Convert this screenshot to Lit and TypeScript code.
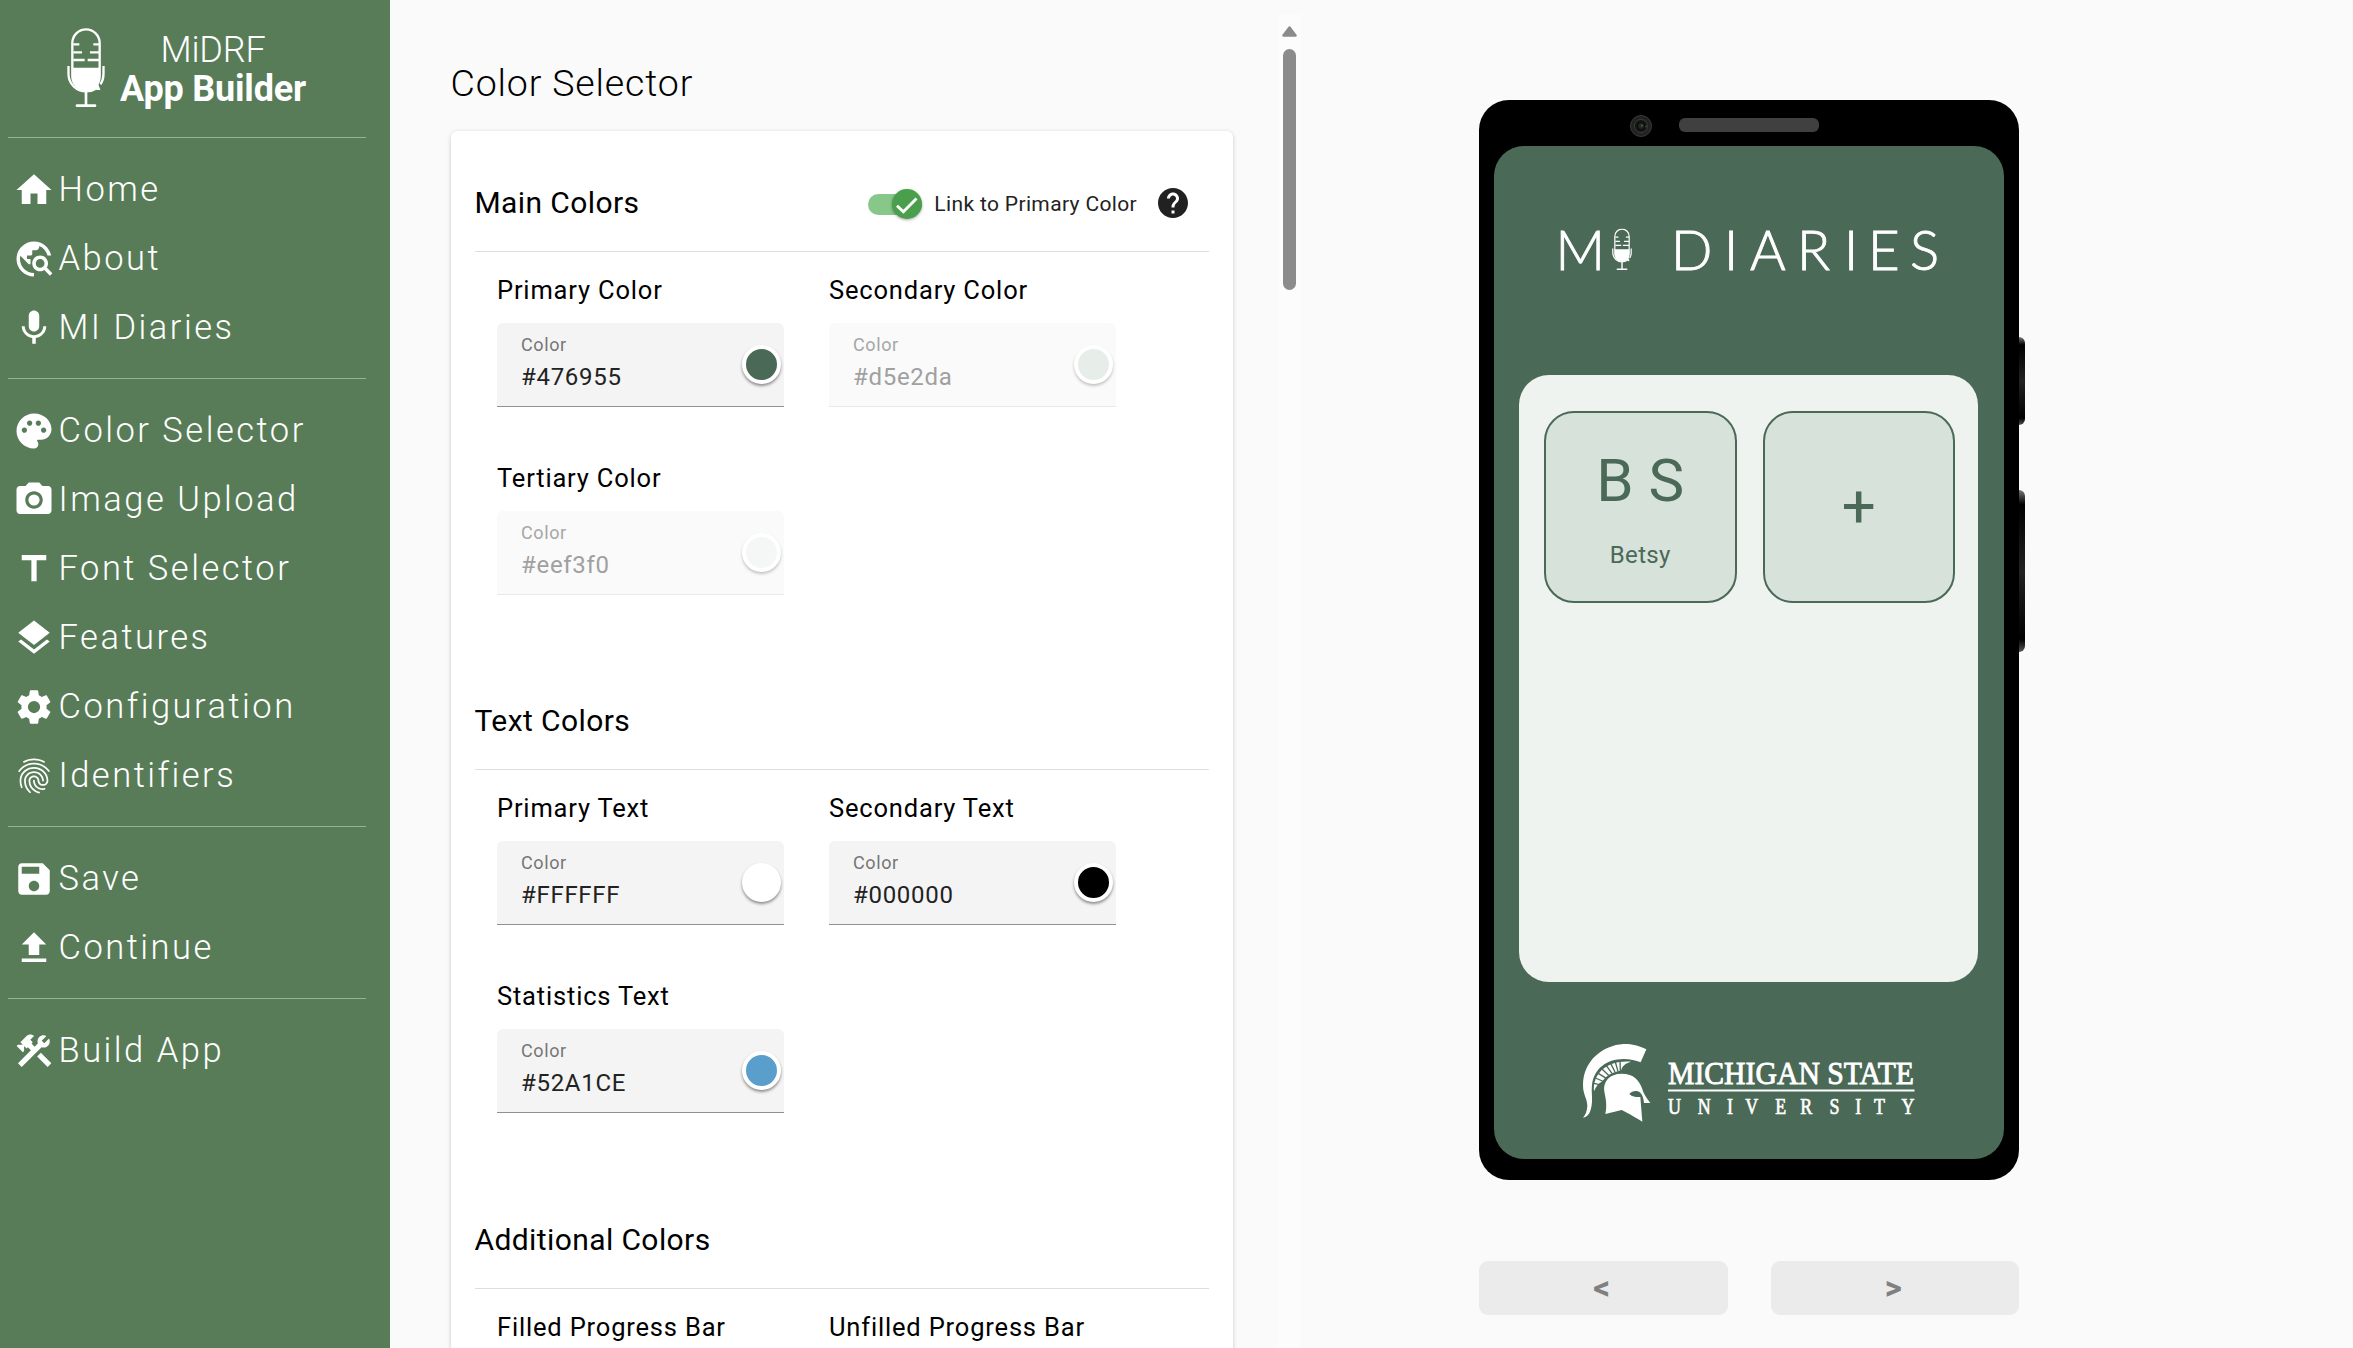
import { LitElement, html, svg, css, nothing } from "lit";
import { customElement, property } from "lit/decorators.js";
import { classMap } from "lit/directives/class-map.js";
import { styleMap } from "lit/directives/style-map.js";

const ICONS: Record<string, string> = {
  home: "M10 20v-6h4v6h5v-8h3L12 3 2 12h3v8z",
  explore:
    "M19.3 16.9c.4-.7.7-1.5.7-2.4 0-2.5-2-4.5-4.5-4.5S11 12 11 14.5s2 4.5 4.5 4.5c.9 0 1.7-.3 2.4-.7l3.2 3.2 1.4-1.4-3.2-3.2zm-3.8.1c-1.4 0-2.5-1.1-2.5-2.5s1.1-2.5 2.5-2.5 2.5 1.1 2.5 2.5-1.1 2.5-2.5 2.5zM12 20v2C6.48 22 2 17.52 2 12S6.48 2 12 2c4.84 0 8.87 3.44 9.8 8h-2.07c-.64-2.46-2.4-4.47-4.73-5.41V5c0 1.1-.9 2-2 2h-2v2c0 .55-.45 1-1 1H8v2h2v3H9l-4.79-4.79C4.08 10.79 4 11.38 4 12c0 4.41 3.59 8 8 8z",
  mic: "M12 14c1.66 0 2.99-1.34 2.99-3L15 5c0-1.66-1.34-3-3-3S9 3.34 9 5v6c0 1.66 1.34 3 3 3zm5.3-3c0 3-2.54 5.1-5.3 5.1S6.7 14 6.7 11H5c0 3.41 2.72 6.23 6 6.72V21h2v-3.28c3.28-.48 6-3.3 6-6.72h-1.7z",
  palette:
    "M12 2C6.49 2 2 6.49 2 12s4.49 10 10 10c1.38 0 2.5-1.12 2.5-2.5 0-.61-.23-1.2-.64-1.67-.08-.1-.13-.21-.13-.33 0-.28.22-.5.5-.5H16c3.31 0 6-2.69 6-6 0-4.96-4.49-9-10-9zm5.5 11c-.83 0-1.5-.67-1.5-1.5s.67-1.5 1.5-1.5 1.5.67 1.5 1.5-.67 1.5-1.5 1.5zm-3-4c-.83 0-1.5-.67-1.5-1.5S13.67 6 14.5 6s1.5.67 1.5 1.5S15.33 9 14.5 9zM5 11.5c0-.83.67-1.5 1.5-1.5s1.5.67 1.5 1.5S7.33 13 6.5 13 5 12.33 5 11.5zm6-4c0 .83-.67 1.5-1.5 1.5S8 8.33 8 7.5 8.67 6 9.5 6s1.5.67 1.5 1.5z",
  camera:
    "M12 8.8a3.2 3.2 0 1 0 0 6.4 3.2 3.2 0 0 0 0-6.4zM9 2L7.17 4H4c-1.1 0-2 .9-2 2v12c0 1.1.9 2 2 2h16c1.1 0 2-.9 2-2V6c0-1.1-.9-2-2-2h-3.17L15 2H9zm3 15c-2.76 0-5-2.24-5-5s2.24-5 5-5 5 2.24 5 5-2.24 5-5 5z",
  title: "M5 4v3h5.5v12h3V7H19V4z",
  layers:
    "M11.99 18.54l-7.37-5.73L3 14.07l9 7 9-7-1.63-1.27-7.38 5.74zM12 16l7.36-5.73L21 9l-9-7-9 7 1.63 1.27L12 16z",
  settings:
    "M19.14 12.94c.04-.3.06-.61.06-.94 0-.32-.02-.64-.07-.94l2.03-1.58c.18-.14.23-.41.12-.61l-1.92-3.32c-.12-.22-.37-.29-.59-.22l-2.39.96c-.5-.38-1.03-.7-1.62-.94l-.36-2.54c-.04-.24-.24-.41-.48-.41h-3.84c-.24 0-.43.17-.47.41l-.36 2.54c-.59.24-1.13.57-1.62.94l-2.39-.96c-.22-.08-.47 0-.59.22L2.74 8.87c-.12.21-.08.47.12.61l2.03 1.58c-.05.3-.09.63-.09.94s.02.64.07.94l-2.03 1.58c-.18.14-.23.41-.12.61l1.92 3.32c.12.22.37.29.59.22l2.39-.96c.5.38 1.03.7 1.62.94l.36 2.54c.05.24.24.41.48.41h3.84c.24 0 .44-.17.47-.41l.36-2.54c.59-.24 1.13-.56 1.62-.94l2.39.96c.22.08.47 0 .59-.22l1.92-3.32c.12-.22.07-.47-.12-.61l-2.01-1.58zM12 15.5a3.5 3.5 0 1 1 0-7 3.5 3.5 0 0 1 0 7z",
  fingerprint:
    "M17.81 4.47c-.08 0-.16-.02-.23-.06C15.66 3.42 14 3 12.01 3c-1.98 0-3.86.47-5.57 1.41-.24.13-.54.04-.68-.2-.13-.24-.04-.55.2-.68C7.82 2.52 9.86 2 12.01 2c2.13 0 3.99.47 6.03 1.52.25.13.34.43.21.67-.09.18-.26.28-.44.28zM3.5 9.72c-.1 0-.2-.03-.29-.09-.23-.16-.28-.47-.12-.7.99-1.4 2.25-2.5 3.75-3.27C9.98 4.04 14 4.03 17.15 5.65c1.5.77 2.76 1.86 3.75 3.25.16.22.11.54-.12.7-.23.16-.54.11-.7-.12-.9-1.26-2.04-2.25-3.39-2.94-2.87-1.47-6.54-1.47-9.4.01-1.36.7-2.5 1.7-3.4 2.96-.08.14-.23.21-.39.21zm6.25 12.07c-.13 0-.26-.05-.35-.15-.87-.87-1.34-1.43-2.01-2.64-.69-1.23-1.05-2.73-1.05-4.34 0-2.97 2.54-5.39 5.66-5.39s5.66 2.42 5.66 5.39c0 .28-.22.5-.5.5s-.5-.22-.5-.5c0-2.42-2.09-4.39-4.66-4.39-2.57 0-4.66 1.97-4.66 4.39 0 1.44.32 2.77.93 3.85.64 1.15 1.08 1.64 1.85 2.42.19.2.19.51 0 .71-.11.1-.24.15-.37.15zm7.17-1.85c-1.19 0-2.24-.3-3.1-.89-1.49-1.01-2.38-2.65-2.38-4.39 0-.28.22-.5.5-.5s.5.22.5.5c0 1.41.72 2.74 1.94 3.56.71.48 1.54.71 2.54.71.24 0 .64-.03 1.04-.1.27-.05.53.13.58.41.05.27-.13.53-.41.58-.57.11-1.07.12-1.21.12zM14.91 22c-.04 0-.09-.01-.13-.02-1.59-.44-2.63-1.03-3.72-2.1-1.4-1.39-2.17-3.24-2.17-5.22 0-1.62 1.38-2.94 3.08-2.94 1.7 0 3.08 1.32 3.08 2.94 0 1.07.93 1.94 2.08 1.94s2.08-.87 2.08-1.94c0-3.77-3.25-6.83-7.25-6.83-2.84 0-5.44 1.58-6.61 4.03-.39.81-.59 1.76-.59 2.8 0 .78.07 2.01.67 3.61.1.26-.03.55-.29.64-.26.1-.55-.04-.64-.29-.49-1.31-.73-2.61-.73-3.96 0-1.2.23-2.29.68-3.24 1.33-2.79 4.28-4.6 7.51-4.6 4.55 0 8.25 3.51 8.25 7.83 0 1.62-1.38 2.94-3.08 2.94s-3.08-1.32-3.08-2.94c0-1.07-.93-1.94-2.08-1.94s-2.08.87-2.08 1.94c0 1.71.66 3.31 1.87 4.51.95.94 1.86 1.46 3.27 1.85.27.07.42.35.35.61-.05.23-.26.38-.47.38z",
  save: "M17 3H5c-1.11 0-2 .9-2 2v14c0 1.1.89 2 2 2h14c1.1 0 2-.9 2-2V7l-4-4zm-5 16c-1.66 0-3-1.34-3-3s1.34-3 3-3 3 1.34 3 3-1.34 3-3 3zm3-10H5V5h10v4z",
  upload: "M5 20h14v-2H5v2zm0-10h4v6h6v-6h4l-7-7-7 7z",
  build:
    "M13.78 15.17l2.12-2.12 6 6-2.12 2.12zM17.5 10c1.93 0 3.5-1.57 3.5-3.5 0-.58-.16-1.12-.41-1.6l-2.7 2.7-1.49-1.49 2.7-2.7c-.48-.25-1.02-.41-1.6-.41C15.57 3 14 4.57 14 6.5c0 .41.08.8.21 1.16l-1.85 1.85-1.78-1.78.71-.71-1.41-1.41L12 3.49c-1.17-1.17-3.07-1.17-4.24 0L4.22 7.03l1.41 1.41H2.81L2.1 9.15l3.54 3.54.71-.71V9.15l1.41 1.41.71-.71 1.78 1.78-7.41 7.41 2.12 2.12L16.34 9.79c.36.13.75.21 1.16.21z",
  help: "M12 2C6.48 2 2 6.48 2 12s4.48 10 10 10 10-4.48 10-10S17.52 2 12 2zm1 17h-2v-2h2v2zm2.07-7.75l-.9.92C13.45 12.9 13 13.5 13 15h-2v-.5c0-1.1.45-2.1 1.17-2.83l1.24-1.26c.37-.36.59-.86.59-1.41 0-1.1-.9-2-2-2s-2 .9-2 2H8c0-2.21 1.79-4 4-4s4 1.79 4 4c0 .88-.36 1.68-.93 2.25z",
};

const icon = (name: string) =>
  html`<svg class="icon" viewBox="0 0 24 24" fill="currentColor"><path d=${ICONS[name]} /></svg>`;

/* Studio microphone with a speech-bubble tail, drawn in a 114 x 237 box. */
const micShape = svg`
  <rect x="16" y="4" width="82" height="182" rx="41" fill="none" stroke="#fff" stroke-width="7" />
  <path d="M16 119h82v27c0 10-2 16-4 22l6 18c-8 1-14 0-20-4-7 3-14 4-23 4-24 0-41-18-41-40z" fill="#fff" />
  <path d="M19 49h18M79 49h18M19 73h26M69 73h28M19 96h34M62 96h35" stroke="#fff" stroke-width="7" />
  <path d="M4.500 114v24c0 30 24 52 52.500 52 10 0 20-2 28-7M109.500 114v24c0 12-3 22-9 31" fill="none" stroke="#fff" stroke-width="7" />
  <path d="M57 190v43" stroke="#fff" stroke-width="8" />
  <path d="M30 233h54" stroke="#fff" stroke-width="8" stroke-linecap="round" />
`;

interface NavItem {
  icon: string;
  label: string;
}

const NAV: NavItem[][] = [
  [
    { icon: "home", label: "Home" },
    { icon: "explore", label: "About" },
    { icon: "mic", label: "MI Diaries" },
  ],
  [
    { icon: "palette", label: "Color Selector" },
    { icon: "camera", label: "Image Upload" },
    { icon: "title", label: "Font Selector" },
    { icon: "layers", label: "Features" },
    { icon: "settings", label: "Configuration" },
    { icon: "fingerprint", label: "Identifiers" },
  ],
  [
    { icon: "save", label: "Save" },
    { icon: "upload", label: "Continue" },
  ],
  [{ icon: "build", label: "Build App" }],
];

@customElement("side-nav")
class SideNav extends LitElement {
  static styles = css`
    :host {
      display: block;
      box-sizing: border-box;
      width: 390px;
      flex: none;
      background: #587c58;
      color: #fff;
      font-weight: 300;
    }
    .brand {
      display: flex;
      box-sizing: border-box;
      height: 137px;
      padding: 28px 0 0 67px;
      gap: 15px;
    }
    .brand svg {
      width: 38px;
      height: 79px;
    }
    .name {
      padding-top: 3px;
      font-size: 36px;
      line-height: 39px;
      letter-spacing: -0.2px;
      text-align: center;
    }
    .name b {
      display: block;
      font-weight: 700;
    }
    .group {
      margin: 0 24px 0 8px;
      padding: 17px 0 16px;
      border-top: 1px solid rgba(255, 255, 255, 0.4);
    }
    .item {
      display: flex;
      align-items: center;
      height: 69px;
      padding-left: 5px;
      gap: 3.5px;
      font-size: 34.5px;
      letter-spacing: 2.5px;
    }
    .item span {
      padding-bottom: 2px;
    }
    .icon {
      width: 42px;
      height: 42px;
      flex: none;
    }
  `;
  render() {
    return html`
      <header class="brand">
        <svg viewBox="0 0 114 237">${micShape}</svg>
        <div class="name">MiDRF<b>App Builder</b></div>
      </header>
      ${NAV.map(
        (group) => html`<nav class="group">
          ${group.map((i) => html`<div class="item">${icon(i.icon)}<span>${i.label}</span></div>`)}
        </nav>`
      )}
    `;
  }
}

@customElement("color-field")
class ColorField extends LitElement {
  @property() label = "";
  @property() value = "";
  @property() swatch = "";
  @property({ type: Boolean }) disabled = false;

  static styles = css`
    :host {
      display: block;
    }
    .label {
      font-size: 25.5px;
      line-height: 30px;
      letter-spacing: 0.82px;
      color: #000;
      white-space: nowrap;
    }
    .box {
      display: flex;
      box-sizing: border-box;
      height: 84px;
      margin-top: 18px;
      padding: 0 3px 0 24px;
      align-items: center;
      justify-content: space-between;
      background: #f4f4f4;
      border-bottom: 1.5px solid #919191;
      border-radius: 6px 6px 0 0;
    }
    .hint {
      font-size: 18px;
      line-height: 21px;
      letter-spacing: 0.6px;
      color: #767676;
    }
    .value {
      margin-top: 4px;
      font-size: 24px;
      line-height: 36px;
      letter-spacing: 0.7px;
      color: #222;
    }
    .text {
      padding-top: 0;
    }
    .swatch {
      box-sizing: border-box;
      width: 39px;
      height: 39px;
      border: 4.5px solid #fff;
      border-radius: 50%;
      box-shadow: 0 2px 3px rgba(0, 0, 0, 0.42);
    }
    .box.off {
      background: #fafafa;
      border-bottom-color: #e8e8e8;
    }
    .off .hint {
      color: #a6a6a6;
    }
    .off .value {
      color: #a0a0a0;
    }
    .off .swatch {
      box-shadow: 0 2px 3px rgba(0, 0, 0, 0.22);
    }
  `;
  render() {
    return html`
      <div class="label">${this.label}</div>
      <div class=${classMap({ box: true, off: this.disabled })}>
        <div class="text">
          <div class="hint">Color</div>
          <div class="value">${this.value}</div>
        </div>
        <div class="swatch" style=${styleMap({ background: this.swatch })}></div>
      </div>
    `;
  }
}

interface Field {
  label: string;
  value: string;
  swatch: string;
  disabled?: boolean;
}

const SECTIONS: { title: string; linked?: boolean; fields: Field[] }[] = [
  {
    title: "Main Colors",
    linked: true,
    fields: [
      { label: "Primary Color", value: "#476955", swatch: "#4b6957" },
      { label: "Secondary Color", value: "#d5e2da", swatch: "#e7eeea", disabled: true },
      { label: "Tertiary Color", value: "#eef3f0", swatch: "#f5f7f6", disabled: true },
    ],
  },
  {
    title: "Text Colors",
    fields: [
      { label: "Primary Text", value: "#FFFFFF", swatch: "#ffffff" },
      { label: "Secondary Text", value: "#000000", swatch: "#000000" },
      { label: "Statistics Text", value: "#52A1CE", swatch: "#5a9fcb" },
    ],
  },
  {
    title: "Additional Colors",
    fields: [
      { label: "Filled Progress Bar", value: "", swatch: "" },
      { label: "Unfilled Progress Bar", value: "", swatch: "" },
    ],
  },
];

@customElement("color-panel")
class ColorPanel extends LitElement {
  static styles = css`
    :host {
      display: block;
      box-sizing: border-box;
      width: 888px;
      flex: none;
      padding: 61px 45px 0 61px;
      overflow: hidden;
    }
    .title {
      margin: 0 0 25.9px -0.5px;
      font-size: 37.5px;
      line-height: 44px;
      font-weight: 300;
      letter-spacing: 0.85px;
      color: #000;
    }
    .card {
      background: #fff;
      border-radius: 6px;
      box-shadow: 0 1px 4px rgba(0, 0, 0, 0.2);
      padding: 0 24px;
    }
    .section {
      height: 518.4px;
    }
    .head {
      display: flex;
      box-sizing: border-box;
      align-items: center;
      height: 121px;
      padding: 24px 18px 0 0;
      border-bottom: 1px solid #dedede;
    }
    .head h2 {
      flex: 1;
      margin: 0 0 0 -0.5px;
      font-size: 30px;
      line-height: 36px;
      font-weight: 400;
      letter-spacing: 0.4px;
      color: #000;
    }
    .grid {
      display: grid;
      grid-template-columns: 287px 287px;
      column-gap: 45px;
      row-gap: 56px;
      padding: 23px 22px 0;
    }
    .switch {
      position: relative;
      width: 54px;
      height: 21px;
      margin-top: 4px;
      border-radius: 11px;
      background: #87c78a;
    }
    .thumb {
      position: absolute;
      right: 0;
      top: -5px;
      width: 30px;
      height: 30px;
      border-radius: 50%;
      background: #4a9f4d;
      box-shadow: 0 1px 3px rgba(0, 0, 0, 0.35);
    }
    .thumb svg {
      display: block;
      width: 30px;
      height: 30px;
    }
    .link {
      margin: 3px 18px 0 12.5px;
      font-size: 21px;
      line-height: 26px;
      letter-spacing: 0.35px;
      color: #222;
    }
    .icon {
      width: 36px;
      height: 36px;
      color: #212121;
    }
  `;
  render() {
    return html`
      <h1 class="title">Color Selector</h1>
      <div class="card">
        ${SECTIONS.map(
          (s) => html`<section class="section">
            <div class="head">
              <h2>${s.title}</h2>
              ${s.linked
                ? html`<div class="switch">
                      <div class="thumb">
                        <svg viewBox="0 0 30 30">
                          <path d="M5 16.800l6.400 6L24.500 9.500" fill="none" stroke="#fff" stroke-width="2.900" />
                        </svg>
                      </div>
                    </div>
                    <span class="link">Link to Primary Color</span>
                    ${icon("help")}`
                : nothing}
            </div>
            <div class="grid">
              ${s.fields.map(
                (f) => html`<color-field
                  .label=${f.label}
                  .value=${f.value}
                  .swatch=${f.swatch}
                  .disabled=${!!f.disabled}
                ></color-field>`
              )}
            </div>
          </section>`
        )}
      </div>
    `;
  }
}

@customElement("phone-preview")
class PhonePreview extends LitElement {
  static styles = css`
    :host {
      display: block;
      flex: 1;
      padding: 100px 0 0 178px;
    }
    .phone {
      position: relative;
      display: flex;
      flex-direction: column;
      box-sizing: border-box;
      width: 540px;
      height: 1080px;
      padding: 0 15px 21px;
      border-radius: 30px;
      background: #000;
    }
    .top {
      display: flex;
      align-items: center;
      height: 46px;
      padding-left: 136px;
      gap: 27px;
      flex: none;
    }
    .lens {
      width: 22px;
      height: 22px;
      margin-top: 5px;
    }
    .speaker {
      width: 140px;
      height: 14px;
      margin-top: 4px;
      border-radius: 6px;
      background: #404040;
    }
    .key {
      position: absolute;
      left: 540px;
      width: 6px;
      border-radius: 0 6px 6px 0;
      background: linear-gradient(#777, #000 9%, #222 50%, #000 92%, #555);
    }
    .up {
      top: 237px;
      height: 88px;
    }
    .down {
      top: 390px;
      height: 162px;
    }
    .screen {
      display: flex;
      flex: 1;
      flex-direction: column;
      align-items: center;
      border-radius: 30px;
      background: #4a6956;
    }
    .wordmark {
      width: 510px;
      height: 229px;
      flex: none;
    }
    .wordmark text {
      font-family: Lato, sans-serif;
      font-weight: 300;
      font-size: 54.5px;
      fill: #fff;
      stroke: #fff;
      stroke-width: 0.9px;
    }
    .panel {
      display: flex;
      box-sizing: border-box;
      width: 459px;
      height: 607px;
      margin-right: 1px;
      padding: 36px 23px 0 25px;
      justify-content: space-between;
      border-radius: 30px;
      background: #eef3ef;
      flex: none;
    }
    .tile {
      display: flex;
      box-sizing: border-box;
      flex-direction: column;
      align-items: center;
      width: 192.5px;
      height: 192px;
      border: 2px solid #4a6956;
      border-radius: 30px;
      background: #d7e2da;
      color: #4a6956;
    }
    .initials {
      margin-top: 33px;
      font-size: 60px;
      line-height: 70px;
    }
    .who {
      margin-top: 23px;
      font-size: 24px;
      line-height: 32px;
      letter-spacing: 0.3px;
    }
    .plus {
      margin: auto;
      font-size: 60px;
      line-height: 70px;
    }
    .school {
      width: 510px;
      height: 177px;
      flex: none;
    }
    .school text {
      font-family: "Liberation Serif", serif;
      fill: #fff;
      stroke: #fff;
    }
    .pager {
      display: flex;
      width: 540px;
      margin-top: 81px;
      justify-content: space-between;
    }
    .step {
      width: 248.5px;
      height: 54px;
      border: 0;
      padding: 0 3px 0 0;
      border-radius: 9px;
      background: #ebebeb;
      color: #808080;
      font: 700 33px/54px Roboto, sans-serif;
    }
  `;
  render() {
    return html`
      <div class="phone">
        <div class="top">
          <svg class="lens" viewBox="0 0 22 22">
            <circle cx="11" cy="11" r="10.500" fill="#222" stroke="#3a3a3a" />
            <circle cx="11" cy="11" r="6.500" fill="#141414" stroke="#3c3c3c" />
            <circle cx="11" cy="11" r="3.500" fill="#232a23" stroke="#080808" />
            <circle cx="12" cy="10.500" r="1" fill="#4a6644" />
            <circle cx="16" cy="11.500" r="1" fill="#2f4b32" />
          </svg>
          <div class="speaker"></div>
        </div>
        <div class="screen">
          <svg class="wordmark" viewBox="1494 146 510 229">
            <text y="270" x="1555.500 1671 1724 1750 1797 1844 1868 1910">MDIARIES</text>
            <svg x="1612" y="228.500" width="20" height="41.500" viewBox="0 0 114 237">${micShape}</svg>
          </svg>
          <div class="panel">
            <div class="tile">
              <div class="initials">B S</div>
              <div class="who">Betsy</div>
            </div>
            <div class="tile"><div class="plus">+</div></div>
          </div>
          <svg class="school" viewBox="1494 982 510 177">
            <g transform="translate(1570 1030) scale(0.33333)" fill="#fff">
              <path
                d="M229 58C205 45 180 41 160 42C100 46 40 90 39 165C39 195 52 205 52 228C51 245 45 257 39 263C55 261 64 245 66 215C67 195 64 185 66 165C72 115 110 88 160 87C180 87 198 91 212 97Z"
              />
              <path d="M72 184C68 130 110 90 183 95C165 100 157 108 153 122C125 126 108 137 97 154C85 160 78 170 72 184Z" />
              <path
                d="M72 160L100 167M76 144L104 156M85 130L110 146M96 117L117 137M109 107L126 130M122 100L135 126M136 96L144 124M150 92L151 124"
                stroke="#4a6956"
                stroke-width="4"
              />
              <path
                d="M103 185C98 155 118 131 155 131C192 131 208 152 216 175C221 193 230 205 241 219L222 219C221 205 218 196 211 188C200 179 185 184 178 192C188 202 200 201 211 201L217 275C195 262 180 252 155 240L106 252C112 225 107 205 103 185Z"
              />
            </g>
            <text x="1668" y="1084.300" font-size="32.500" stroke-width="0.900" textLength="246" lengthAdjust="spacingAndGlyphs">MICHIGAN STATE</text>
            <rect x="1668" y="1089.500" width="246.500" height="2" fill="#fff" />
            <g transform="translate(1668 1113.500) scale(0.780 1)">
              <text
                y="0"
                font-size="23"
                stroke-width="0.700"
                x="0 38 75.500 99 137.500 169.500 207 240 264 299.500"
              >UNIVERSITY</text>
            </g>
          </svg>
        </div>
        <div class="key up"></div>
        <div class="key down"></div>
      </div>
      <div class="pager">
        <button class="step">&lt;</button>
        <button class="step">&gt;</button>
      </div>
    `;
  }
}

@customElement("app-root")
class AppRoot extends LitElement {
  static styles = css`
    :host {
      display: flex;
      width: 100%;
      height: 1348px;
      overflow: hidden;
      background: #fafafa;
      font-family: Roboto, sans-serif;
    }
    .scroll {
      display: flex;
      flex: none;
      flex-direction: column;
      align-items: center;
      box-sizing: border-box;
      width: 23px;
      margin-top: 14px;
      padding-top: 12px;
      background: #fcfcfc;
    }
    .scroll svg {
      width: 15px;
      height: 11px;
    }
    .thumb {
      width: 13px;
      height: 241px;
      margin-top: 12px;
      border-radius: 7px;
      background: #8b8b8b;
    }
  `;
  render() {
    return html`
      <side-nav></side-nav>
      <color-panel></color-panel>
      <div class="scroll">
        <svg viewBox="0 0 15 11">
          <path d="M7.500 1.500L13.500 9.500H1.500z" fill="#8b8b8b" stroke="#8b8b8b" stroke-width="2.500" stroke-linejoin="round" />
        </svg>
        <div class="thumb"></div>
      </div>
      <phone-preview></phone-preview>
    `;
  }
}
